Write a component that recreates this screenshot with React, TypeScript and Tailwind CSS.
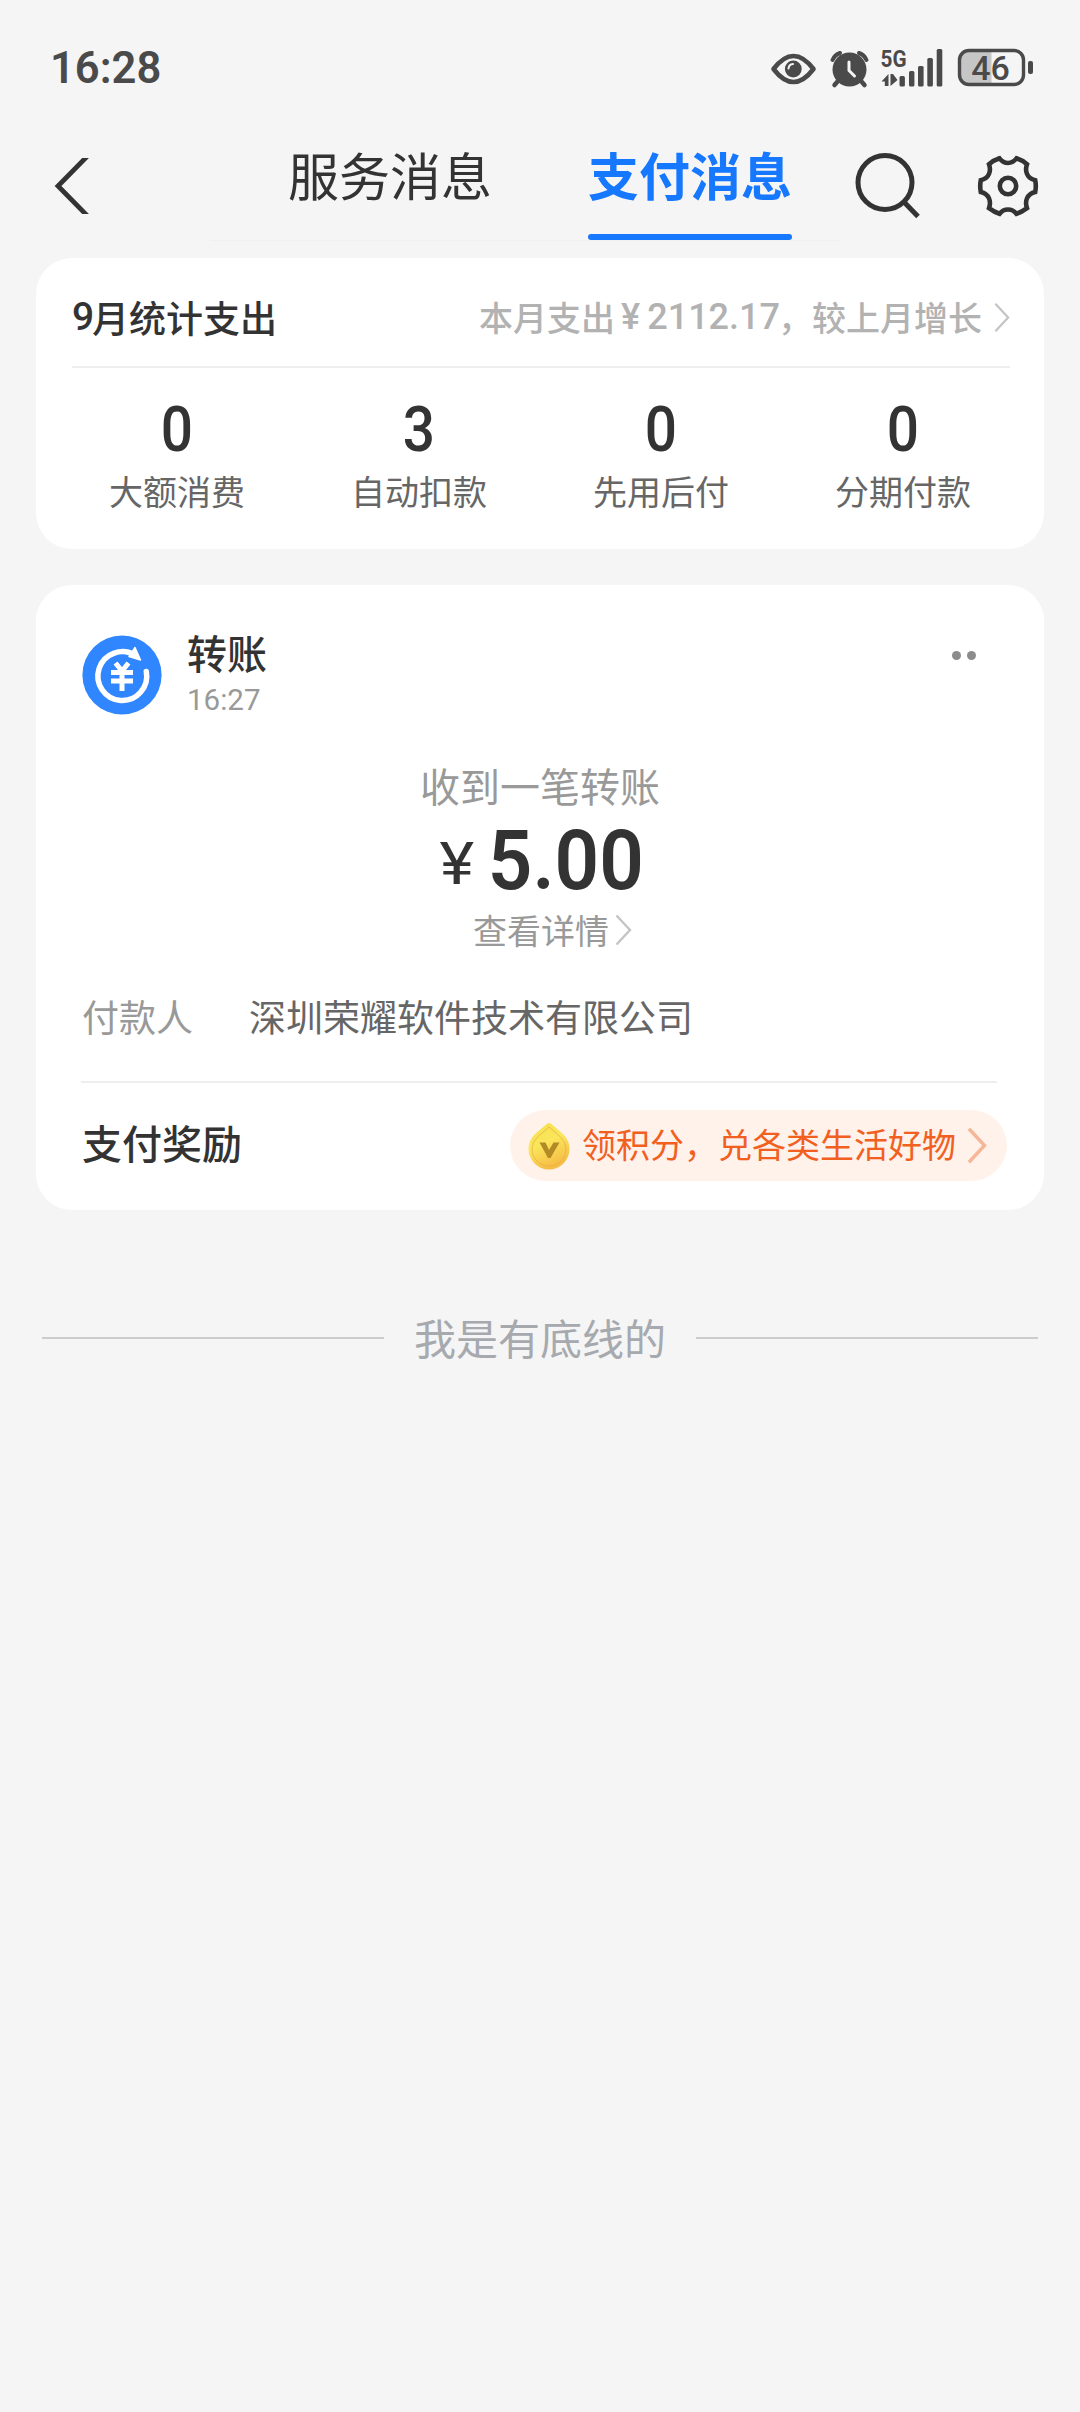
import React from 'react';

interface Stat {
  value: number;
  label: string;
}

const stats: Stat[] = [
  { value: 0, label: '大额消费' },
  { value: 3, label: '自动扣款' },
  { value: 0, label: '先用后付' },
  { value: 0, label: '分期付款' },
];

const Chevron: React.FC<{ className?: string; strokeWidth?: number }> = ({ className = '', strokeWidth = 2.4 }) => (
  <svg viewBox="0 0 17 32" fill="none" stroke="currentColor" strokeWidth={strokeWidth} className={`shrink-0 ${className}`}>
    <path d="M1.5 1.5L15 16L1.5 30.5" />
  </svg>
);

const StatusBar = () => (
  <div className="h-[134px] pl-[50px] pr-[46px] flex items-start justify-between text-[#4a4a4a]">
    <span className="mt-[43px] h-[52px] leading-[52px] font-['Roboto',sans-serif] font-semibold text-[43.5px]">16:28</span>
    <svg width="264" height="60" viewBox="770 38 264 60" className="mt-[38px]" fill="currentColor">
      {/* eye */}
      <path d="M773.5 69C780 60.5 787 56 793.5 56S807 60.5 813.5 69C807 77.5 800 82 793.5 82S780 77.5 773.5 69Z" fill="none" stroke="currentColor" strokeWidth="4.6" strokeLinejoin="round" />
      <circle cx="793.3" cy="69" r="8.4" />
      <path d="M788.5 68.5A5 5 0 0 1 793 64" fill="none" stroke="#f5f5f5" strokeWidth="2" strokeLinecap="round" />
      {/* alarm */}
      <circle cx="849.5" cy="69.5" r="17" />
      <path d="M832.5 60A13 13 0 0 1 840 53M866.5 60A13 13 0 0 0 859 53" fill="none" stroke="currentColor" strokeWidth="4" strokeLinecap="round" />
      <path d="M838 81L834.5 85M861 81L864.5 85" fill="none" stroke="currentColor" strokeWidth="4.5" strokeLinecap="round" />
      <path d="M849 62V70.5L854.5 76" fill="none" stroke="#f5f5f5" strokeWidth="3" strokeLinecap="round" strokeLinejoin="round" />
      {/* signal */}
      <text x="880.5" y="67" fontFamily="Roboto, sans-serif" fontWeight="700" fontSize="24.5" textLength="26" lengthAdjust="spacingAndGlyphs">5G</text>
      <path d="M881.5 81.5L888.5 74V86H884.8V81.5ZM890.5 74H893L897.5 80L890.5 86Z" />
      <rect x="899.5" y="76" width="5.4" height="10.5" rx="1.5" />
      <rect x="909" y="71" width="5.4" height="15.5" rx="1.5" />
      <rect x="918" y="66" width="5.6" height="20.5" rx="1.5" />
      <rect x="927.3" y="58" width="5.6" height="28.5" rx="1.5" />
      <rect x="936.7" y="49" width="5.6" height="37.5" rx="1.5" />
      {/* battery */}
      <path d="M991.5 51H969A9 9 0 0 0 960 60V75A9 9 0 0 0 969 84H991.5Z" fill="#c6c6c6" />
      <rect x="959.5" y="50.5" width="64" height="34" rx="9.5" fill="none" stroke="currentColor" strokeWidth="3.4" />
      <rect x="1028" y="61" width="5" height="13" rx="2" />
      <text x="990.5" y="80" textAnchor="middle" fontFamily="Roboto, sans-serif" fontWeight="500" fontSize="34">46</text>
    </svg>
  </div>
);

const NavBar = () => (
  <div className="h-[124px] flex items-start text-[#333]">
    <svg width="36" height="56" viewBox="54 158 36 56" className="ml-[54px] mt-[24px]" fill="none" stroke="currentColor" strokeWidth="4.8">
      <path d="M89 154.5L58 186L89 217.5" />
    </svg>
    <nav className="ml-[120px] w-[630px] h-[107px] pl-[78px] flex gap-24 border-b border-[#f0f0f0] text-[51px] leading-[72px]">
      <span className="mt-[4px]">服务消息</span>
      <span className="h-[106px] pt-[4px] flex flex-col justify-between font-bold text-[#1677ff]">
        支付消息
        <i className="h-[6px] rounded-full bg-[#1677ff]" />
      </span>
    </nav>
    <svg width="66" height="68" viewBox="855 152 66 68" className="ml-[15px] mt-[18px]" fill="none" stroke="currentColor" strokeWidth="5">
      <circle cx="885" cy="182.5" r="27" />
      <path d="M904 202L918 216.5" />
    </svg>
    <svg width="64" height="64" viewBox="976 154 64 64" className="ml-[55px] mt-[20px]" fill="none" stroke="currentColor" strokeWidth="4.6">
      <path d="M999.5 158.3C1002 161.5 1004.5 163 1008 163S1014 161.5 1016.5 158.3Q1022 160 1027 164.3C1024.5 171 1027 178.5 1035.2 180.2Q1036.4 186 1035.2 192C1027 194 1024.5 201 1027 208.2Q1022 212 1016.5 213.8C1014 210.5 1011.5 209.5 1008 209.5S1002 210.5 999.5 213.8Q994 212 989 208.2C991.5 201 989 194 980.8 192Q979.6 186 980.8 180.2C989 178.5 991.5 171 989 164.3Q994 160 999.5 158.3Z" />
      <circle cx="1008" cy="186" r="8.2" />
    </svg>
  </div>
);

const SummaryCard = () => (
  <section className="mx-9 h-[291px] rounded-[36px] bg-white px-5">
    <div className="ml-4 mr-[14px] h-[110px] pt-[10px] flex items-center justify-between border-b-2 border-[#eee]">
      <h2 className="flex items-center text-[37px] leading-[50px] font-medium text-[#333]">
        <span className="font-['Roboto',sans-serif] text-[39px] w-[20px]">9</span>月统计支出
      </h2>
      <div className="flex items-center text-[34px] leading-[50px] font-medium text-[#b2b2b2]">
        本月支出
        <span className="pl-[6px] font-['Roboto',sans-serif] text-[36px]">¥</span>
        <span className="pl-[7px] -mr-[2px] font-['Roboto',sans-serif] text-[36px]">2112.17</span>
        ，较上月增长
        <Chevron className="ml-[12px] w-[16px] h-[31px] text-[#c4c4c4]" />
      </div>
    </div>
    <div className="grid grid-cols-4 pt-[26px]">
      {stats.map((s) => (
        <div key={s.label} className="flex flex-col items-center">
          <span className="scale-x-90 font-['Roboto',sans-serif] font-medium text-[63px] leading-[72px] text-[#333]">{s.value}</span>
          <span className="text-[34px] leading-[50px] text-[#666]">{s.label}</span>
        </div>
      ))}
    </div>
  </section>
);

const TransferIcon = () => (
  <svg width="80" height="80" viewBox="0 0 80 80" className="shrink-0">
    <circle cx="40" cy="40" r="39.6" fill="#2f86fe" />
    <path d="M53.5 20.5A24.4 24.4 0 1 0 64.3 36.5" fill="none" stroke="#fff" strokeWidth="5.5" strokeLinecap="round" />
    <path d="M53 12.5L58.5 25L47 21.5Z" fill="#fff" stroke="#fff" strokeWidth="1.5" strokeLinejoin="round" />
    <path d="M33.5 28L40 36L46.5 28M29 37.5H51M29 46H51M40 36V56" fill="none" stroke="#fff" strokeWidth="5" />
  </svg>
);

const PointsCoin = () => (
  <svg width="42" height="48" viewBox="0 0 42 48" className="shrink-0">
    <defs>
      <linearGradient id="coin" x1="0" y1="0" x2="0.4" y2="1">
        <stop offset="0" stopColor="#f3e04c" />
        <stop offset="0.5" stopColor="#fbe65c" />
        <stop offset="1" stopColor="#f6bd46" />
      </linearGradient>
    </defs>
    <path d="M21 1Q22.5 1 24.5 3L35 12Q41.5 18.5 41.5 27A20.5 20.5 0 0 1 .5 27Q.5 18.5 7 12L17.5 3Q19.5 1 21 1Z" fill="url(#coin)" />
    <path d="M21 5L32 14.5Q38 20 38 27A17 17 0 0 1 4 27Q4 20 10 14.5Z" fill="none" stroke="#e3ad3c" strokeOpacity="0.7" strokeWidth="1" />
    <path d="M11.5 20.5H17.5L21 28L25.5 20.5H31.5L22.5 36H20Z" fill="#b28a26" />
  </svg>
);

const TransferCard = () => (
  <section className="mx-9 mt-9 h-[625px] rounded-[36px] bg-white">
    <div className="pt-[50px] pl-[46px] pr-[68px] h-[170px] flex items-start">
      <TransferIcon />
      <div className="ml-[25px] -mt-[13px] flex flex-col">
        <span className="text-[40px] leading-[60px] font-medium text-[#333]">转账</span>
        <span className="mt-[1px] font-['Roboto',sans-serif] text-[29.5px] leading-[34px] text-[#999]">16:27</span>
      </div>
      <div className="ml-auto mt-[16px] flex gap-[6px]">
        <i className="size-[9px] rounded-full bg-[#8c8c8c]" />
        <i className="size-[9px] rounded-full bg-[#8c8c8c]" />
      </div>
    </div>
    <div className="flex flex-col items-center text-[#999]">
      <span className="text-[40px] leading-[60px]">收到一笔转账</span>
      <div className="pl-[5px] pt-[6px] h-[88px] flex items-baseline font-['Roboto',sans-serif] text-[#333] leading-[80px]">
        <span className="mr-[3px] -translate-y-[5px] scale-x-110 text-[60px]">¥</span>
        <span className="origin-right scale-x-[0.93] text-[84px] font-semibold">5.00</span>
      </div>
      <div className="flex items-center text-[34px] leading-[54px]">
        查看详情
        <Chevron className="ml-[6px] -mr-[25px] w-[17px] h-[32px] text-[#c4c4c4]" />
      </div>
    </div>
    <div className="mt-[32px] ml-[46px] flex text-[37px] leading-[54px]">
      <span className="w-[167px] text-[#999]">付款人</span>
      <span className="text-[#666]">深圳荣耀软件技术有限公司</span>
    </div>
    <div className="mt-[38px] ml-[45px] mr-[47px] border-t-2 border-[#eee]" />
    <div className="mt-[27px] pl-[46px] pr-[37px] flex items-center justify-between">
      <span className="pb-[7px] text-[40px] leading-[60px] font-medium text-[#333]">支付奖励</span>
      <div className="w-[497px] h-[71px] pl-[18px] flex items-center rounded-full bg-[#fff2eb] text-[34px] leading-[50px] text-[#f1601f]">
        <PointsCoin />
        <span className="ml-[12px] pb-[3px] whitespace-nowrap">领积分，兑各类生活好物</span>
        <Chevron strokeWidth={3} className="ml-[11px] w-[20px] h-[37px] text-[#f6b698]" />
      </div>
    </div>
  </section>
);

export default function App() {
  return (
    <div className="w-[1080px] h-[2412px] overflow-hidden bg-[#f5f5f5] font-['Noto_Sans_CJK_SC',sans-serif]">
      <StatusBar />
      <NavBar />
      <SummaryCard />
      <TransferCard />
      <footer className="mt-[98px] px-[42px] flex items-center justify-between text-[42px] leading-[60px] text-[#a6a9ae]">
        <i className="w-[342px] h-[2px] bg-[#ccc]" />
        <span className="-mt-px">我是有底线的</span>
        <i className="w-[342px] h-[2px] bg-[#ccc]" />
      </footer>
    </div>
  );
}
